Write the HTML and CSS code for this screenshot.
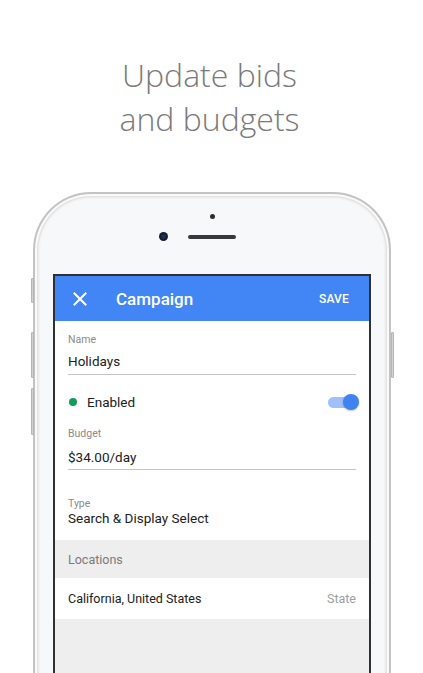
FILE: index.html
```html
<!DOCTYPE html>
<html>
<head>
<meta charset="utf-8">
<link rel="stylesheet" href="styles.css">
</head>
<body>
<div class="page">
  <h1 class="headline">Update bids<br>and budgets</h1>
  <div class="phone">
    <span class="btn btn-mute"></span>
    <span class="btn btn-vol-up"></span>
    <span class="btn btn-vol-down"></span>
    <span class="btn btn-power"></span>
    <div class="sensors">
      <span class="sensor-dot"></span>
      <div class="sensor-row">
        <span class="camera"></span>
        <span class="speaker"></span>
        <span class="sensor-spacer"></span>
      </div>
    </div>
    <div class="screen">
      <div class="appbar">
        <svg class="close-icon" width="14" height="14" viewBox="0 0 14 14"><path d="M1.5 1.5 L12.5 12.5 M12.5 1.5 L1.5 12.5" stroke="#fff" stroke-width="2" stroke-linecap="square"/></svg>
        <span class="appbar-title">Campaign</span>
        <span class="appbar-action">SAVE</span>
      </div>
      <div class="form">
        <div class="field field-name">
          <div class="field-label">Name</div>
          <div class="field-value">Holidays</div>
        </div>
        <div class="status-row">
          <span class="status-dot"></span>
          <span class="status-text">Enabled</span>
          <span class="toggle"><span class="toggle-track"></span><span class="toggle-knob"></span></span>
        </div>
        <div class="field field-budget">
          <div class="field-label">Budget</div>
          <div class="field-value">$34.00/day</div>
        </div>
        <div class="type-block">
          <div class="field-label">Type</div>
          <div class="type-value">Search &amp; Display Select</div>
        </div>
      </div>
      <div class="section-header">Locations</div>
      <div class="list-row">
        <span class="list-main">California, United States</span>
        <span class="list-meta">State</span>
      </div>
      <div class="filler"></div>
    </div>
  </div>
</div>
</body>
</html>
```

FILE: styles.css
```css
html, body {
  margin: 0;
  padding: 0;
  background: #ffffff;
}
.page {
  width: 423px;
  height: 673px;
  overflow: hidden;
  display: flex;
  flex-direction: column;
  align-items: flex-start;
}
.headline {
  width: 423px;
  margin: 53px 0 0 -2px;
  font-family: "Open Sans", sans-serif;
  font-weight: 300;
  font-size: 32px;
  line-height: 44px;
  color: #7a7a7a;
  text-align: center;
}
.phone {
  position: relative;
  box-sizing: border-box;
  width: 358px;
  height: 540px;
  margin: 51px 0 0 33px;
  flex-shrink: 0;
  border: 2px solid #c3c3c3;
  border-bottom: none;
  border-radius: 58px 58px 0 0;
  background: #f7f8f9;
  box-shadow: inset 0 0 0 2px #fafafa, inset 0 0 0 3.5px #e4e4e4, inset 0 0 0 5px #f3f3f3;
  display: flex;
  flex-direction: column;
  align-items: center;
}
.btn {
  position: absolute;
  width: 3px;
  background: #d2d2d2;
  border: 0.5px solid #b5b5b5;
  box-sizing: border-box;
  border-radius: 1px;
}
.btn-mute { left: -4.5px; top: 84px; height: 25px; }
.btn-vol-up { left: -4.5px; top: 138px; height: 46px; }
.btn-vol-down { left: -4.5px; top: 194px; height: 47px; }
.btn-power { right: -4.5px; top: 138px; height: 46px; }
.sensors {
  height: 80px;
  display: flex;
  flex-direction: column;
  align-items: center;
  padding-top: 20px;
  box-sizing: border-box;
}
.sensor-dot {
  width: 5px;
  height: 5px;
  border-radius: 50%;
  background: #2b2d31;
}
.sensor-row {
  margin-top: 13px;
  display: flex;
  align-items: center;
  gap: 20px;
  height: 9px;
}
.camera {
  width: 9px;
  height: 9px;
  border-radius: 50%;
  background: radial-gradient(circle at 50% 50%, #1f3a6b 0, #141a2a 55%, #2b2d31 100%);
}
.speaker {
  width: 48px;
  height: 4px;
  border-radius: 2px;
  background: #36383c;
}
.sensor-spacer {
  width: 9px;
}
.screen {
  box-sizing: border-box;
  width: 318px;
  flex: 1;
  border: 2px solid #2f3033;
  border-bottom: none;
  background: #eeeeee;
  display: flex;
  flex-direction: column;
  font-family: Roboto, "Noto Sans", sans-serif;
}
.appbar {
  height: 45px;
  flex-shrink: 0;
  background: #4285f4;
  display: flex;
  align-items: center;
  padding: 0 20px 0 18px;
  color: #ffffff;
}
.close-icon {
  display: block;
  flex-shrink: 0;
}
.appbar-title {
  margin-left: 29px;
  font-size: 17px;
  font-weight: 500;
  flex: 1;
}
.appbar-action {
  font-size: 12px;
  font-weight: 500;
  letter-spacing: 0.2px;
}
.form {
  background: #ffffff;
  padding: 0 13px;
  display: flex;
  flex-direction: column;
}
.field {
  border-bottom: 1px solid #c4c4c4;
}
.field-label {
  font-size: 10.5px;
  line-height: 13px;
  color: #8a8a8a;
}
.field-value {
  font-size: 13.5px;
  line-height: 20px;
  color: #212121;
}
.field-name {
  padding-top: 12px;
  padding-bottom: 3px;
}
.field-name .field-value {
  margin-top: 4.5px;
}
.status-row {
  height: 36px;
  margin-top: 9.5px;
  display: flex;
  align-items: center;
}
.status-dot {
  width: 8px;
  height: 8px;
  border-radius: 50%;
  background: #0f9d58;
  margin-left: 1px;
}
.status-text {
  margin-left: 10px;
  font-size: 13.5px;
  color: #212121;
  flex: 1;
}
.toggle {
  position: relative;
  width: 31px;
  height: 16px;
  margin-right: -3px;
}
.toggle-track {
  position: absolute;
  left: 0;
  top: 2.5px;
  width: 27px;
  height: 11px;
  border-radius: 6px;
  background: #9fc0f8;
}
.toggle-knob {
  position: absolute;
  right: 0;
  top: 0;
  width: 16px;
  height: 16px;
  border-radius: 50%;
  background: #3f82f0;
  box-shadow: 0 1px 2px rgba(0,0,0,0.25);
}
.field-budget {
  margin-top: 7px;
  padding-bottom: 2px;
}
.field-budget .field-value {
  margin-top: 6.5px;
}
.type-block {
  padding-top: 27.5px;
  padding-bottom: 14px;
}
.type-value {
  font-size: 13.5px;
  line-height: 16px;
  color: #212121;
}
.section-header {
  height: 38px;
  flex-shrink: 0;
  display: flex;
  align-items: center;
  padding: 0 13px;
  font-size: 12.5px;
  color: #7a7a7a;
  background: #eeeeee;
}
.list-row {
  height: 41px;
  flex-shrink: 0;
  display: flex;
  align-items: center;
  justify-content: space-between;
  padding: 0 13px;
  background: #ffffff;
}
.list-main {
  font-size: 12.5px;
  color: #212121;
}
.list-meta {
  font-size: 12.5px;
  color: #9e9e9e;
}
.filler {
  flex: 1;
  background: #eeeeee;
}
```
